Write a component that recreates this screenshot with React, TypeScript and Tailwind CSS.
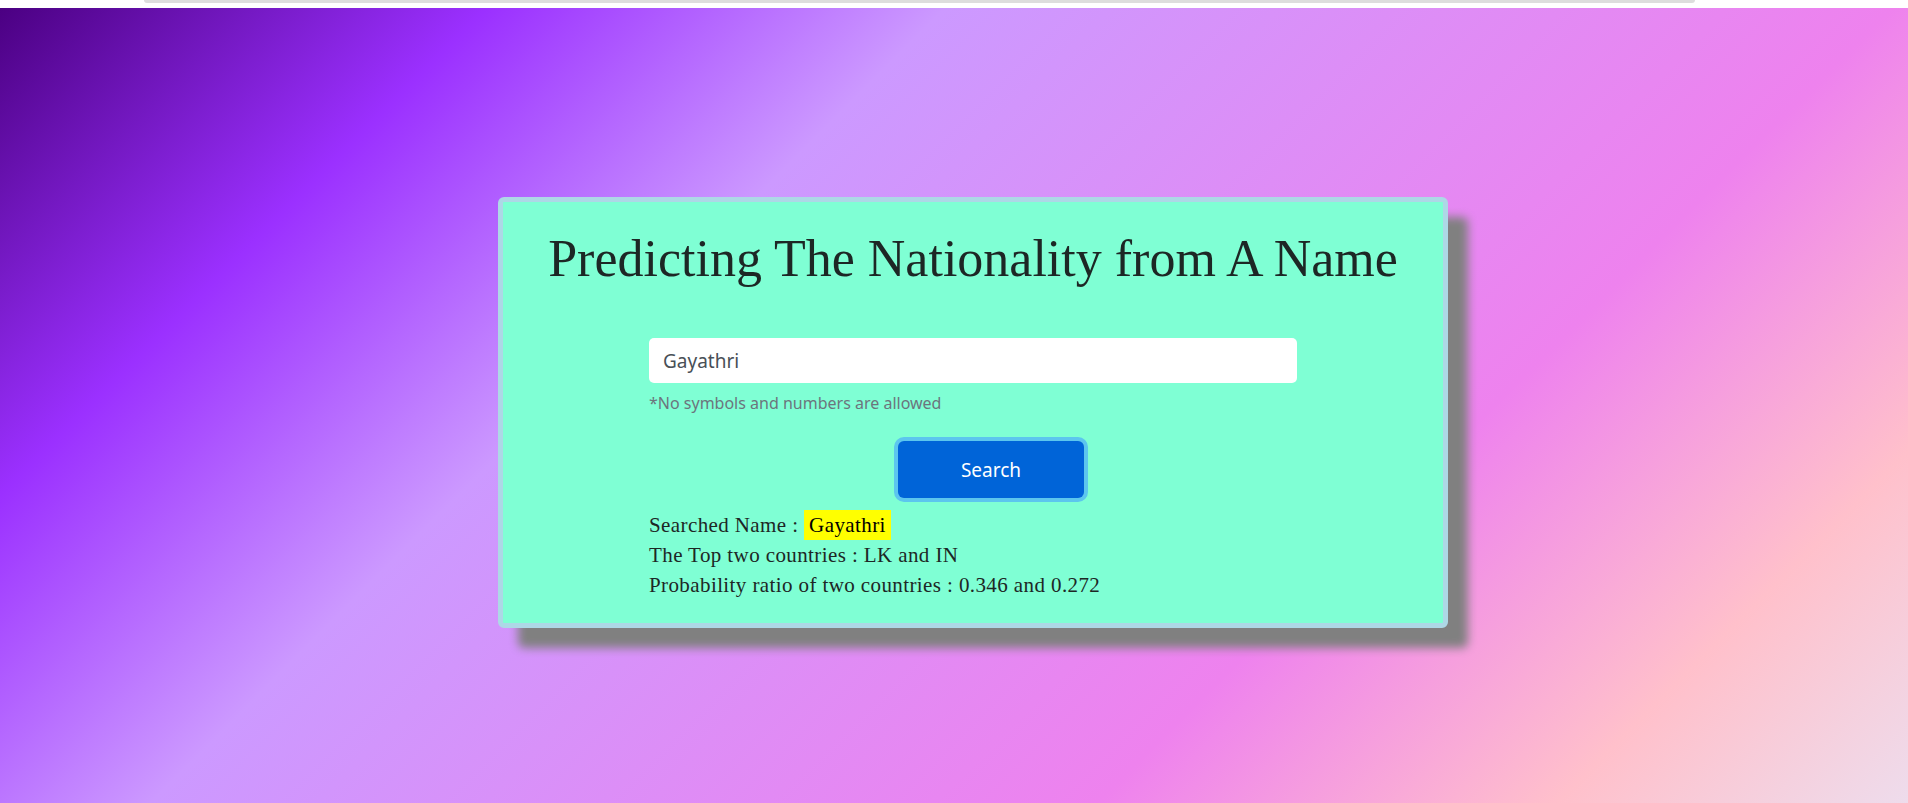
import React from "react";

export default function App() {
  return (
    <div className="min-h-[803px] w-full flex flex-col bg-white">
      {/* thin browser strip at the very top */}
      <div className="h-[8px] bg-white shrink-0">
        <div className="ml-[144px] w-[1551px] h-[3px] bg-[#dddddd] rounded-b-full" />
      </div>

      <main className="flex-1 h-[795px] bg-[linear-gradient(135deg,#4b0082_0%,#9b30ff_18%,#cc99ff_35%,#ee82ee_70%,#ffc0cb_87%,#eedcec_100%)] flex justify-center pl-[38px] pt-[189px]">
        <div className="w-[950px] h-[431px] bg-[#7fffd4] border-[5px] border-[#add8e6] rounded-[6px] shadow-[20px_20px_10px_gray] pt-[26px]">
          <h1 className="text-center text-[52px] leading-[1.2] text-[#1d2725] font-['Liberation_Serif',serif]">
            Predicting The Nationality from A Name
          </h1>

          <div className="w-[648px] mx-auto mt-[48px]">
            <input
              type="text"
              defaultValue="Gayathri"
              className="w-full h-[45px] bg-white rounded-[5px] px-[14px] text-[19px] text-[#495057] font-['Noto_Sans',sans-serif] outline-none"
            />
            <p className="mt-[10px] text-[16px] leading-[20px] text-[#6c757d] font-['Noto_Sans',sans-serif]">
              *No symbols and numbers are allowed
            </p>

            <div className="flex justify-center pl-[36px] mt-[28px]">
              <button className="w-[186px] h-[57px] rounded-[6px] bg-[#0064d8] text-white text-[19px] font-['Noto_Sans',sans-serif] ring-4 ring-[#5cc6ee]">
                Search
              </button>
            </div>

            <div className="mt-[12px] text-[21px] leading-[30px] tracking-[0.4px] text-[#1d2725] font-['Liberation_Serif',serif]">
              <p>
                Searched Name :{" "}
                <span className="inline-block bg-[#ffff00] px-[5px] text-black">Gayathri</span>
              </p>
              <p>The Top two countries : LK and IN</p>
              <p>Probability ratio of two countries : 0.346 and 0.272</p>
            </div>
          </div>
        </div>
      </main>
    </div>
  );
}
